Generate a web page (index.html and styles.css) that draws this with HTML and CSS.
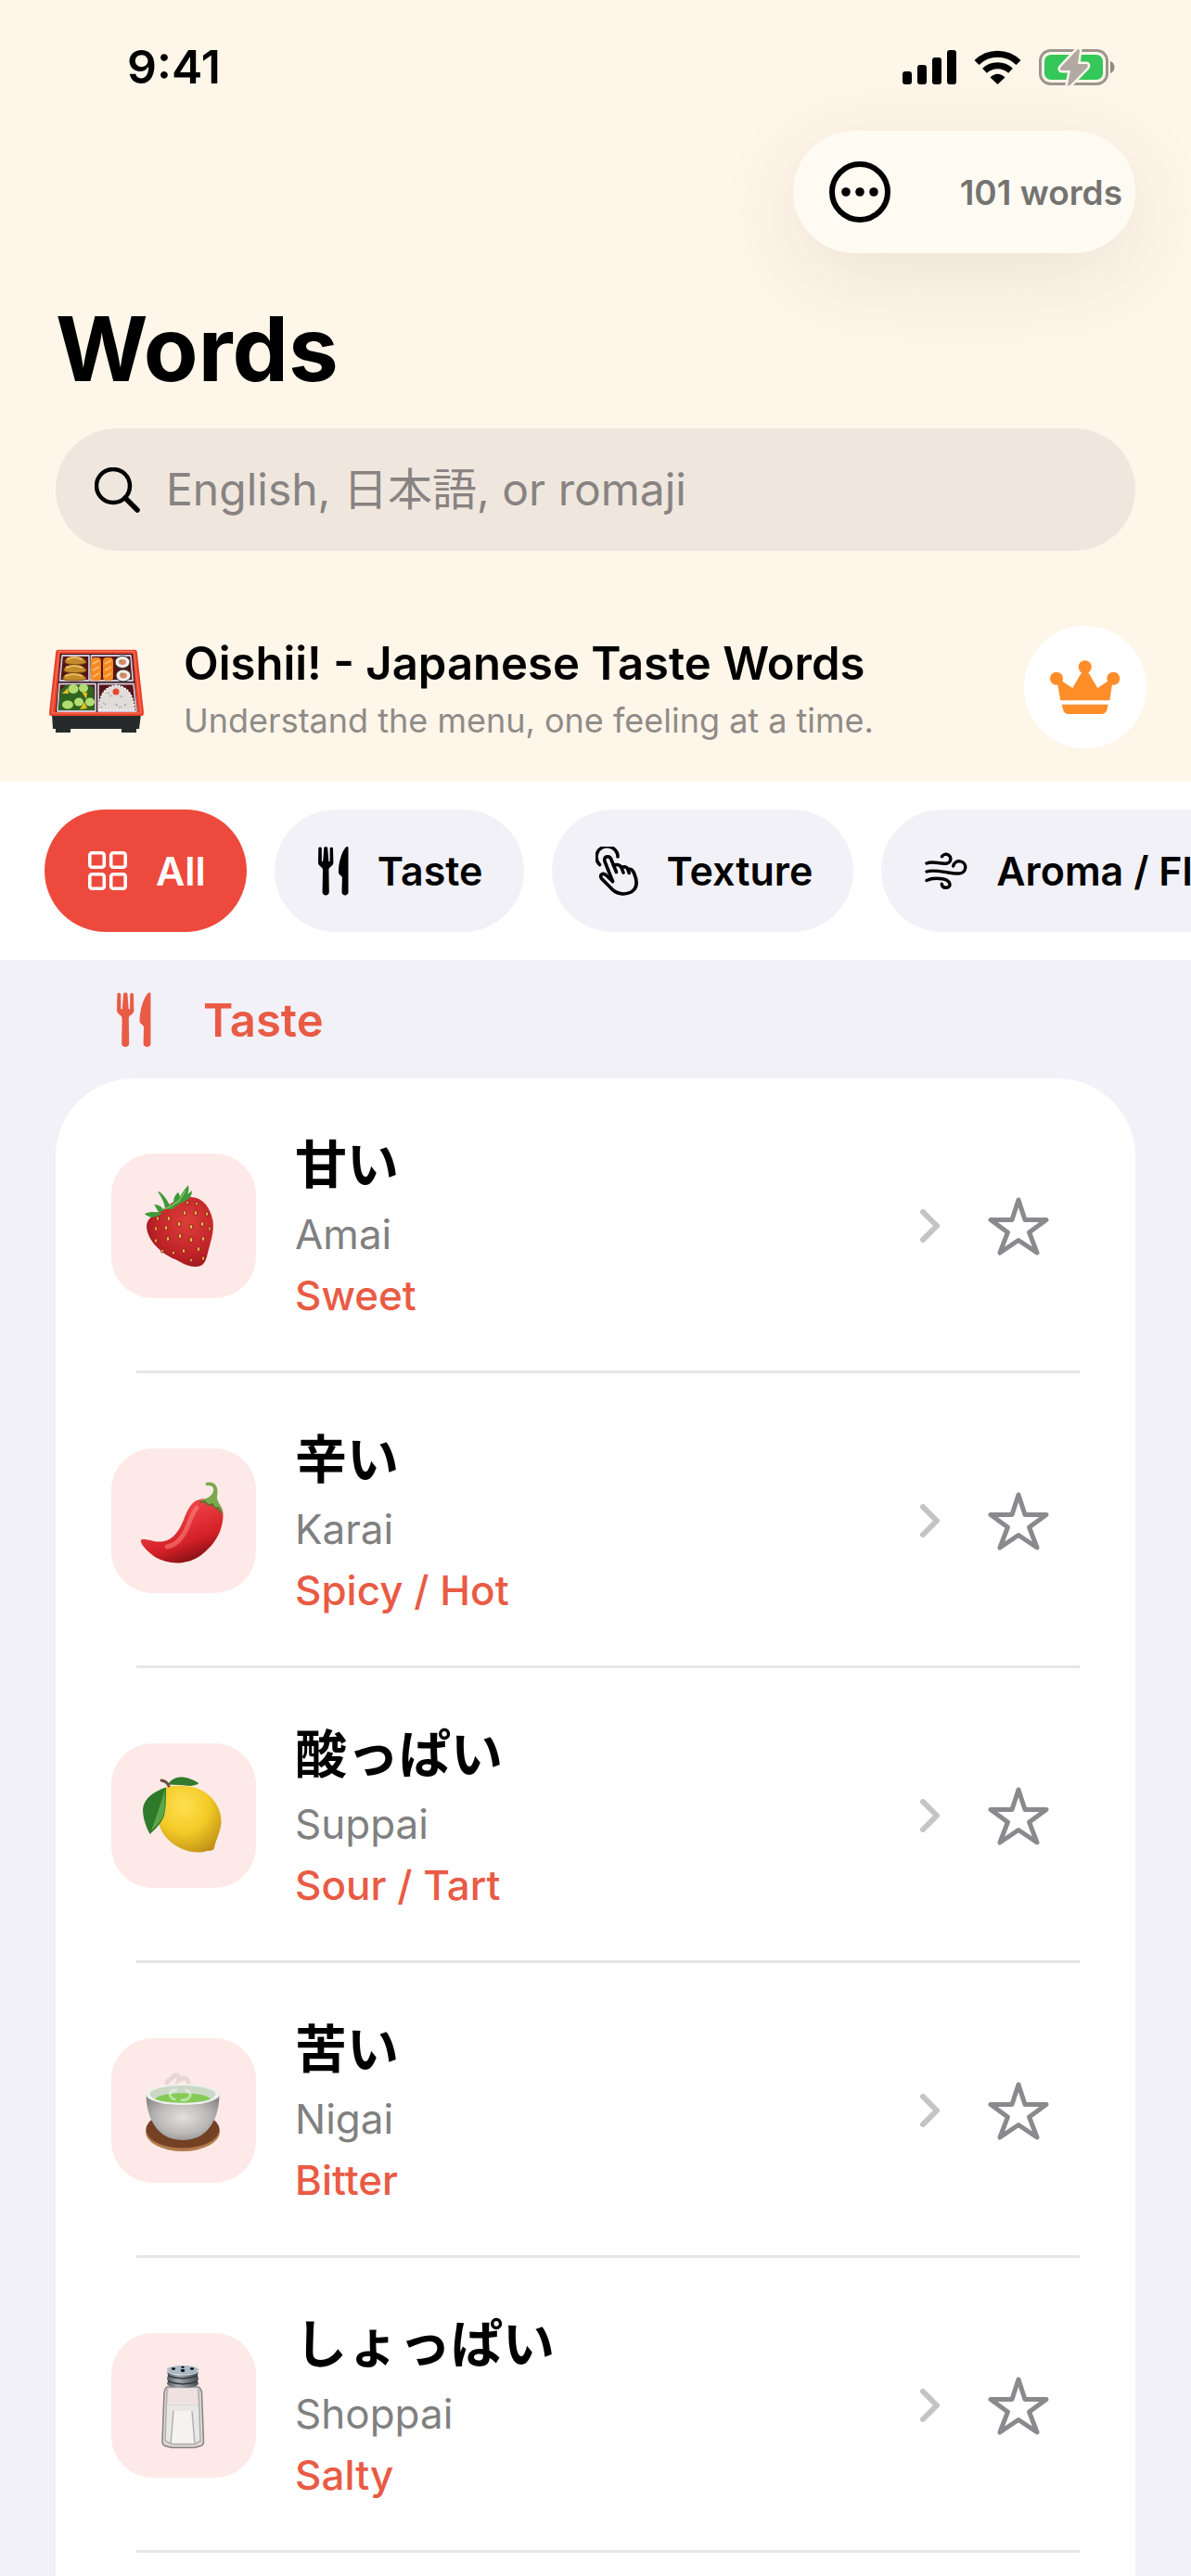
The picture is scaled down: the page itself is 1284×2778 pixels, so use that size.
FILE: index.html
```html
<!DOCTYPE html>
<html lang="en">
<head>
    <meta charset="UTF-8">
    <meta name="viewport" content="width=device-width, initial-scale=1.0">
    <title>Words</title>
    <link rel="stylesheet" href="styles.css">
</head>
<body>
    <!-- shared icons -->
    <svg class="defs" width="0" height="0" aria-hidden="true">
        <symbol id="icon-star" viewBox="0 0 66 63">
            <path d="M33 3L40 24.5H63L44.6 38L53 60L33 46.5L13 60L21.4 38L3 24.5H26Z" fill="none" stroke="currentColor" stroke-width="5" stroke-linejoin="round"/>
        </symbol>
        <symbol id="icon-chevron" viewBox="0 0 22 36">
            <path d="M3 3L18 18L3 33" fill="none" stroke="currentColor" stroke-width="6" stroke-linecap="round" stroke-linejoin="round"/>
        </symbol>
        <symbol id="icon-fork" viewBox="0 0 33 53">
            <path fill="currentColor" d="M2 .4C1 .4.3 1 .3 2L0 17c0 4.500 5 4.500 5 8l-.4 24c0 4.500 7.200 4.500 7.200 0l-.4-24c0-3.500 5-3.500 5-8L16 2c0-1.800-3.300-1.800-3.300 0l-.1 13.500c0 .9-1.300.9-1.300 0L10.200 1.500c0-1.600-3.900-1.600-3.900 0L5.200 15.500c0 .9-1.300.9-1.300 0L3.800 2C3.800 1 3 .4 2 .4z"/>
            <path fill="currentColor" d="M32.500 1.200V49c0 4.500-7 4.500-7 0l.4-16c-.6-2-4-2.500-4-5.500 0-10 3.300-21.500 7.600-26.500 1-1.300 3-1.200 3 .2z"/>
        </symbol>
    </svg>

    <header class="header">
        <div class="status-bar">
            <span class="time">9:41</span>
            <div class="status-icons">
                <svg width="58" height="37" viewBox="0 0 58 37" aria-hidden="true">
                    <rect x="0" y="23" width="10" height="14" rx="3"/>
                    <rect x="16" y="16" width="10" height="21" rx="3"/>
                    <rect x="32" y="8" width="10" height="29" rx="3"/>
                    <rect x="48" y="0" width="10" height="37" rx="3"/>
                </svg>
                <svg width="51" height="37" viewBox="0 0 51 37" aria-hidden="true">
                    <path d="M3 13.500A32 32 0 0 1 48 13.500" fill="none" stroke="#000" stroke-width="7"/>
                    <path d="M11.500 22.300A20.500 20.500 0 0 1 39.500 22.300" fill="none" stroke="#000" stroke-width="7"/>
                    <path d="M17.500 29.500Q25.500 22 33.500 29.500L25.500 37Z"/>
                </svg>
                <svg width="82" height="41" viewBox="0 0 82 41" aria-hidden="true">
                    <rect x="1.500" y="2.500" width="72" height="36" rx="11" fill="none" stroke="#9c958e" stroke-width="3"/>
                    <rect x="6" y="7" width="63" height="27" rx="7" fill="#34c759"/>
                    <path d="M77 14v13c6-2 6-11 0-13z" fill="#8f8a84"/>
                    <path d="M42 1L24 20c-2 2-1 4 1 4h9L31 39c0 2 1.500 2 3 .5L52 21c1.500-2 1-4-1-4h-9L44 2z" fill="#b1a9a2" stroke="#fff6ea" stroke-width="5" paint-order="stroke" stroke-linejoin="round"/>
                </svg>
            </div>
        </div>

        <div class="toolbar">
            <div class="toolbar-pill">
                <button class="more-button" aria-label="More options">
                    <svg width="66" height="66" viewBox="0 0 66 66" aria-hidden="true">
                        <circle cx="33" cy="33" r="30" fill="none" stroke="#000" stroke-width="6"/>
                        <circle cx="18" cy="33" r="4.800"/>
                        <circle cx="33" cy="33" r="4.800"/>
                        <circle cx="48" cy="33" r="4.800"/>
                    </svg>
                </button>
                <span class="word-count">101 words</span>
            </div>
        </div>

        <h1>Words</h1>

        <label class="search">
            <svg width="49" height="49" viewBox="0 0 49 49" fill="none" stroke="#000" stroke-linecap="round" aria-hidden="true">
                <circle cx="20" cy="20" r="18" stroke-width="4.500"/>
                <path d="M33 33L46 46" stroke-width="5.500"/>
            </svg>
            <input type="search" class="search-input" placeholder="English, 日本語, or romaji" aria-label="Search words">
        </label>

        <div class="promo">
            <svg class="promo-emoji" viewBox="-5 -8 112 99" aria-hidden="true">
                <path d="M3 70h96l-2 16h-3v4H78v-4H23v4H7v-4H4z" fill="#272a2b"/>
                <path d="M9.500.7h83q2 0 2.300 2L102 68q.3 4-3 4H3q-3.300 0-3-4L7.200 2.700q.3-2 2.300-2z" fill="#e8432c"/>
                <path d="M10.500 2.500h81L99 69H3z" fill="none" stroke="#ff7a5c" stroke-width="1"/>
                <path d="M12 5h78l5 63H7z" fill="#301418"/>
                <path d="M14 7h29v27H11.500z M45.500 7H88l2.300 27H45z M11 37.500h39V67H9z M53 37.500h38L94 67H53z" fill="#541418" stroke="#cfc4d6" stroke-width="1.800" stroke-linejoin="round"/>
                <g fill="#c58a2c" stroke="#805014" stroke-width="1">
                    <path d="M17 14c-1-7 20-8 23 0 1 3-22 4-23 0z"/>
                    <path d="M16 23c-1-7 21-8 24 0 1 3-23 4-24 0z"/>
                    <path d="M15 32c-1-7 22-8 25 0 1 2-24 3-25 0z"/>
                </g>
                <path d="M19 11q8-4 17 0M18 20q9-4 18 0M17 29q9-4 19 0" stroke="#e8bd5e" stroke-width="2" fill="none"/>
                <rect x="45" y="9" width="11" height="25" rx="4" fill="#f68a20"/>
                <rect x="58" y="9" width="11" height="25" rx="4" fill="#f68a20"/>
                <path d="M47 16l7-4M47 23l7-4M47 30l7-4M60 16l7-4M60 23l7-4M60 30l7-4" stroke="#ffbd68" stroke-width="2"/>
                <g stroke="#2f3a31" stroke-width="1" fill="#f1efee">
                    <ellipse cx="79" cy="14" rx="8" ry="6.500"/>
                    <ellipse cx="80" cy="28.500" rx="8" ry="6.500"/>
                </g>
                <ellipse cx="79" cy="14" rx="4" ry="3" fill="#e8836a"/>
                <ellipse cx="80" cy="28.500" rx="4" ry="3" fill="#e8836a"/>
                <path d="M76 12l3 2M77 26l3 2" stroke="#7ea448" stroke-width="2"/>
                <path d="M12 45q5-8 14-6 12-2 22 2l1 25H10z" fill="#2f6420"/>
                <g fill="#b3dc72">
                    <ellipse cx="26" cy="43" rx="5.500" ry="5"/>
                    <ellipse cx="37" cy="42" rx="5" ry="4.500"/>
                    <ellipse cx="20" cy="60" rx="6" ry="4.500"/>
                    <ellipse cx="32" cy="57" rx="5" ry="4.500"/>
                    <ellipse cx="44" cy="57" rx="5" ry="4.500"/>
                </g>
                <path d="M14 48l6-6 1 6zM35 46l6 1-1 7zM33 65l5-8 3 7z" fill="#e8be24"/>
                <path d="M54 66q-1-24 18-27 19 2 20 27z" fill="#dfdcd9" stroke="#fff" stroke-width="1.500" stroke-dasharray="2 1.500"/>
                <path d="M58 58l3 2m4-9l3-1m3 9l3 2m5-9l-3-2m7 9l-2 2m-19-14l3 1m10 15l3-1m-21 1l-2-1" stroke="#aaa5a2" stroke-width="1.200"/>
                <circle cx="72" cy="46" r="3.500" fill="#e84730"/>
            </svg>
            <div class="promo-text">
                <h2>Oishii! - Japanese Taste Words</h2>
                <p>Understand the menu, one feeling at a time.</p>
            </div>
            <button class="crown-button" aria-label="Go premium">
                <svg width="76" height="58" viewBox="0 0 76 58" fill="#ff8d28" aria-hidden="true">
                    <circle cx="7" cy="19.700" r="7"/>
                    <circle cx="37.700" cy="7.200" r="7"/>
                    <circle cx="68.300" cy="19.700" r="7"/>
                    <path d="M8 25L13 22.500L24.300 30L34.500 12.500h6.400L51.300 30L62.500 22.500L67 26L64.300 43.300H11.300Z"/>
                    <path d="M12.700 47.700H62.700L61.500 53q-1.200 5-6 5H20q-4.800 0-6-5z"/>
                </svg>
            </button>
        </div>
    </header>

    <nav class="chips" aria-label="Categories">
        <button class="chip chip-active">
            <svg width="42" height="42" viewBox="0 0 42 42" fill="none" stroke="currentColor" stroke-width="3.600" aria-hidden="true">
                <rect x="1.800" y="1.800" width="15.500" height="15.500" rx="2.500"/>
                <rect x="24.700" y="1.800" width="15.500" height="15.500" rx="2.500"/>
                <rect x="1.800" y="24.700" width="15.500" height="15.500" rx="2.500"/>
                <rect x="24.700" y="24.700" width="15.500" height="15.500" rx="2.500"/>
            </svg>
            All
        </button>
        <button class="chip">
            <svg width="33" height="53" aria-hidden="true"><use href="#icon-fork"/></svg>
            Taste
        </button>
        <button class="chip">
            <svg width="46" height="53" viewBox="0 0 46 53" fill="none" stroke="currentColor" stroke-width="3.600" stroke-linecap="round" stroke-linejoin="round" aria-hidden="true">
                <path d="M4.500 19.500A11.500 11.500 0 1 1 24 11"/>
                <path d="M18.500 37.500L10 16c-2-5 4.500-7.500 6.700-2.700L22.500 27.500"/>
                <path d="M19.500 20.500c3.500-2 7-.5 8.500 2 3-1.500 6-.5 7 2 3-1 5 .5 6.500 4 4.200 9.500 3.500 16.500-3 20.500-8 4-17 1.500-22-4.500L6.500 34.500c-2.500-4.500 1.500-6.500 4.500-4l7.500 7"/>
                <path d="M28 22.500l2 5.500M35 24.500l1.200 4"/>
            </svg>
            Texture
        </button>
        <button class="chip">
            <svg width="46" height="40" viewBox="0 0 46 40" fill="none" stroke="currentColor" stroke-width="3.400" stroke-linecap="round" aria-hidden="true">
                <path d="M2 12c7-3 13 .7 20.500.2a5 5 0 1 0-4-7.500"/>
                <path d="M2 21c9-3.500 23 2.500 35 2a6.600 6.600 0 1 0-6.300-8"/>
                <path d="M2 30.500c6-3 11-2.700 17-1.700 9 1.200 10.500 9.200 4 9.500-2.800.1-4.500-1.500-4.700-4"/>
            </svg>
            Aroma / Flavor
        </button>
    </nav>

    <main class="content">
        <h2 class="section-title">
            <svg width="37" height="60" aria-hidden="true"><use href="#icon-fork"/></svg>
            Taste
        </h2>

        <ul class="word-list">
            <li class="word">
                <div class="word-row">
                    <a href="#amai" class="word-link">
                        <svg class="thumb" viewBox="0 0 156 156" aria-hidden="true">
                            <defs>
                                <radialGradient id="berry" cx=".6" cy=".35" r=".75">
                                    <stop offset="0" stop-color="#dd3f3a"/>
                                    <stop offset=".6" stop-color="#c32429"/>
                                    <stop offset="1" stop-color="#94141c"/>
                                </radialGradient>
                            </defs>
                            <path d="M38 79C38 70 45 67 53 62C62 56 71 47 84 47C98 46 107 58 109.600 73C111 84 107 96 104 107C102 117 99 122 91 122C80 122 75 116 66 113C52 106 39 93 38 79Z" fill="url(#berry)"/>
                            <path d="M50 41c4 0 10 8 13 15l-5 3c-1-7-4-12-8-18zM36 65c6-3 13-2 19-1-5 5-13 7-19 1zM46 55c6 0 9 3 11 7l-6 1c-2-3-3-5-5-8zM67 54c0-6 2-10 5-12 3 3 2 8 1 12zM60 60c2-6 7-6 11-6 2-7 6-13 12-20 1 5 0 8-1 10l5-4c0 6-3 9-7 11-6 3-10 5-14 9z" fill="#3f9a3a"/>
                            <path d="M56 60l6-2 11-7 7-11" fill="none" stroke="#78c25c" stroke-width="1.500"/>
                            <g fill="#f1b24a" stroke="#7d1518" stroke-width=".8">
                                <ellipse cx="50" cy="70" rx="1.500" ry="2.500"/><ellipse cx="62" cy="70" rx="1.800" ry="2.500"/><ellipse cx="79" cy="64" rx="1.800" ry="2.500"/>
                                <ellipse cx="91" cy="64" rx="1.800" ry="2.500"/><ellipse cx="103" cy="65" rx="1.500" ry="2.500"/><ellipse cx="82" cy="53" rx="1.500" ry="2"/>
                                <ellipse cx="92" cy="54" rx="1.500" ry="2"/><ellipse cx="48" cy="81" rx="1.500" ry="2.500"/><ellipse cx="59" cy="80" rx="1.800" ry="2.500"/>
                                <ellipse cx="73" cy="76" rx="1.900" ry="2.700"/><ellipse cx="86" cy="79" rx="1.900" ry="2.700"/><ellipse cx="98" cy="76" rx="1.800" ry="2.700"/>
                                <ellipse cx="106" cy="81" rx="1.300" ry="2.500"/><ellipse cx="48" cy="94" rx="1.500" ry="2.300"/><ellipse cx="61" cy="92" rx="1.800" ry="2.500"/>
                                <ellipse cx="74" cy="89" rx="1.900" ry="2.700"/><ellipse cx="86" cy="93" rx="1.900" ry="2.700"/><ellipse cx="99" cy="92" rx="1.800" ry="2.500"/>
                                <ellipse cx="55" cy="105" rx="1.500" ry="2"/><ellipse cx="67" cy="107" rx="1.600" ry="2"/><ellipse cx="78" cy="105" rx="1.800" ry="2.300"/>
                                <ellipse cx="94" cy="103" rx="1.800" ry="2.500"/><ellipse cx="86" cy="115" rx="1.500" ry="2"/><ellipse cx="99" cy="113" rx="1.500" ry="2.300"/>
                            </g>
                        </svg>
                        <span class="word-text">
                            <span class="word-ja" lang="ja">甘い</span>
                            <span class="word-romaji">Amai</span>
                            <span class="word-en">Sweet</span>
                        </span>
                        <svg class="chevron" aria-hidden="true"><use href="#icon-chevron"/></svg>
                    </a>
                    <button class="star-button" aria-label="Add Amai to favorites">
                        <svg class="star" aria-hidden="true"><use href="#icon-star"/></svg>
                    </button>
                </div>
            </li>
            <li class="word">
                <div class="word-row">
                    <a href="#karai" class="word-link">
                        <svg class="thumb" viewBox="0 0 156 156" aria-hidden="true">
                            <defs>
                                <linearGradient id="chili" x1=".4" y1=".2" x2=".75" y2=".95">
                                    <stop offset="0" stop-color="#ee4045"/>
                                    <stop offset=".6" stop-color="#d42027"/>
                                    <stop offset="1" stop-color="#7c1013"/>
                                </linearGradient>
                            </defs>
                            <path d="M34 98C42 98 47 102 57 100C67 98 73 89 78 77C82 66 87 56 96 55C106 53 120 58 120.500 70C121 90 110 105 97 115C82 126 62 126 47 117C40 112 34 106 32 101C31.500 99 32 98 34 98Z" fill="url(#chili)"/>
                            <path d="M92 64c-8 10-8 21-15 30-4 6-10 11-17 12" fill="none" stroke="#ff8581" stroke-width="5" stroke-linecap="round" opacity=".55"/>
                            <path d="M95 57c7-3 14-5 15-11 1-5-2-6-7-6-2 0-2-3 1-3.500 8-1 12 5 10 15-1 6 6 10 6 19-2-1-4-3-6-7-2 1-4 0-6-4-3 2-6 0-8-3-2 1-4 1-5 .5z" fill="#79a94a"/>
                            <path d="M95 57c2 1 4 1 6 0 2 4 5 5 8 3 2 4 4 5 6 4l4 6" fill="none" stroke="#4d702a" stroke-width="1.500"/>
                        </svg>
                        <span class="word-text">
                            <span class="word-ja" lang="ja">辛い</span>
                            <span class="word-romaji">Karai</span>
                            <span class="word-en">Spicy / Hot</span>
                        </span>
                        <svg class="chevron" aria-hidden="true"><use href="#icon-chevron"/></svg>
                    </a>
                    <button class="star-button" aria-label="Add Karai to favorites">
                        <svg class="star" aria-hidden="true"><use href="#icon-star"/></svg>
                    </button>
                </div>
            </li>
            <li class="word">
                <div class="word-row">
                    <a href="#suppai" class="word-link">
                        <svg class="thumb" viewBox="0 0 156 156" aria-hidden="true">
                            <defs>
                                <radialGradient id="lemon" cx=".4" cy=".3" r=".8">
                                    <stop offset="0" stop-color="#ffe052"/>
                                    <stop offset=".5" stop-color="#f3cb27"/>
                                    <stop offset="1" stop-color="#bd8d14"/>
                                </radialGradient>
                            </defs>
                            <path d="M60 47C70 45 84 45 94 49C108 55 119 69 118.500 85C118 96 112 105 111 113C110 117 104 115 100 117C84 120 66 111 58 100C48 88 50 73 54 62C56 55 56 49 60 47Z" fill="url(#lemon)"/>
                            <path d="M59 47.500C46 52 35 59 34 71C34 82 38 91 41.600 98C50 90 57 83 58 73C59 63 59 57 59 47.500Z" fill="#2f7a2a"/>
                            <path d="M58 50C54 62 49 78 43 94C50 88 56 82 57.500 73Z" fill="#5ba648"/>
                            <path d="M61 44.500C65 38 72 35.500 80 37C87 38.500 91 41 94.500 43C89 47 82 46 75 45Z" fill="#327a2c"/>
                            <path d="M62 46q-2-5-8-6" fill="none" stroke="#6b5146" stroke-width="3" stroke-linecap="round"/>
                        </svg>
                        <span class="word-text">
                            <span class="word-ja" lang="ja">酸っぱい</span>
                            <span class="word-romaji">Suppai</span>
                            <span class="word-en">Sour / Tart</span>
                        </span>
                        <svg class="chevron" aria-hidden="true"><use href="#icon-chevron"/></svg>
                    </a>
                    <button class="star-button" aria-label="Add Suppai to favorites">
                        <svg class="star" aria-hidden="true"><use href="#icon-star"/></svg>
                    </button>
                </div>
            </li>
            <li class="word">
                <div class="word-row">
                    <a href="#nigai" class="word-link">
                        <svg class="thumb" viewBox="0 0 156 156" aria-hidden="true">
                            <defs>
                                <radialGradient id="bowl" cx=".5" cy=".5" r=".6">
                                    <stop offset="0" stop-color="#e2e1e0"/>
                                    <stop offset=".6" stop-color="#b9b8b7"/>
                                    <stop offset="1" stop-color="#8a8988"/>
                                </radialGradient>
                            </defs>
                            <ellipse cx="77" cy="101" rx="40" ry="21" fill="#b27a4b"/>
                            <ellipse cx="77" cy="98.500" rx="39.500" ry="20" fill="#744125"/>
                            <path d="M37.500 61C38 90 52 110 77 110S116 90 116.500 61Z" fill="url(#bowl)"/>
                            <ellipse cx="77" cy="60.500" rx="39.800" ry="11.500" fill="#f0f0ef"/>
                            <ellipse cx="77" cy="60.500" rx="35.500" ry="9.500" fill="#ccd8c6"/>
                            <path d="M47 65.500C53 57 101 57 107 65.500C98 71 56 71 47 65.500Z" fill="#84ca55"/>
                            <path d="M68 66c-8-4-5-10 2-10M76 67c10-1 12-7 5-11" fill="none" stroke="#fff" stroke-width="3" stroke-linecap="round" opacity=".45"/>
                            <path d="M60 48c1-5 6-3 7-7 4-3 7 1 6 4 5-3 9-2 10 2" fill="none" stroke="#d8cac7" stroke-width="5" stroke-linecap="round" opacity=".6"/>
                        </svg>
                        <span class="word-text">
                            <span class="word-ja" lang="ja">苦い</span>
                            <span class="word-romaji">Nigai</span>
                            <span class="word-en">Bitter</span>
                        </span>
                        <svg class="chevron" aria-hidden="true"><use href="#icon-chevron"/></svg>
                    </a>
                    <button class="star-button" aria-label="Add Nigai to favorites">
                        <svg class="star" aria-hidden="true"><use href="#icon-star"/></svg>
                    </button>
                </div>
            </li>
            <li class="word">
                <div class="word-row">
                    <a href="#shoppai" class="word-link">
                        <svg class="thumb" viewBox="0 0 156 156" aria-hidden="true">
                            <defs>
                                <linearGradient id="cap">
                                    <stop offset="0" stop-color="#50585e"/>
                                    <stop offset=".35" stop-color="#a5adb3"/>
                                    <stop offset="1" stop-color="#454c51"/>
                                </linearGradient>
                            </defs>
                            <path d="M60 58h34q3 2 3.500 6l2 53q0 4-4 5l-6 1.500H65L59 122q-4-1-4-5l2-53q.3-4 3-6z" fill="#dcd6d5" stroke="#858280" stroke-width="1.500"/>
                            <path d="M62 60h30l2 17H60z" fill="#efe1df"/>
                            <path d="M60 78h34l2 37-7 4H65l-7-4z" fill="#e9e7e6"/>
                            <path d="M67 84h20l3 34H64z" fill="#f4f3f2"/>
                            <path d="M60 60l-2 56M94 60l2 56M67 84l-3 36M87 84l3 36M58 116l7 4h25l7-4" fill="none" stroke="#b4b0ae" stroke-width="1.500"/>
                            <path d="M60 39h34l-1 7 1 3-1 3 1 3q-3 4-17 4t-17-4l1-3-1-3 1-3z" fill="url(#cap)"/>
                            <path d="M61 46q16 6 32 0M61 52q16 6 32 0" fill="none" stroke="#383e42" stroke-width="1.500"/>
                            <ellipse cx="77" cy="39.500" rx="17" ry="4.500" fill="#a9bac6"/>
                            <path d="M60 40q2 5 17 5t17-5" fill="none" stroke="#dce3e7" stroke-width="1.200"/>
                            <ellipse cx="67" cy="38.500" rx="2" ry="1.200"/><ellipse cx="77" cy="40.500" rx="2.300" ry="1.400"/><ellipse cx="87" cy="38.500" rx="2" ry="1.200"/><ellipse cx="77" cy="36.800" rx="1.800" ry="1"/>
                        </svg>
                        <span class="word-text">
                            <span class="word-ja" lang="ja">しょっぱい</span>
                            <span class="word-romaji">Shoppai</span>
                            <span class="word-en">Salty</span>
                        </span>
                        <svg class="chevron" aria-hidden="true"><use href="#icon-chevron"/></svg>
                    </a>
                    <button class="star-button" aria-label="Add Shoppai to favorites">
                        <svg class="star" aria-hidden="true"><use href="#icon-star"/></svg>
                    </button>
                </div>
            </li>
        </ul>
    </main>
</body>
</html>
```

FILE: styles.css
```css
:root {
    --header-bg: #fff6ea;
    --page-bg: #f2f1f8;
    --accent: #ed4a3d;
    --accent-text: #e95b45;
    --thumb-bg: #fde9e7;
    --gray: #808080;
    --separator: #e6e6e6;
}
* {
    box-sizing: border-box;
}
body {
    font-family: Inter, "Noto Sans CJK JP", sans-serif;
    background-color: var(--page-bg);
    color: #000;
    margin: 0;
    min-height: 100vh;
    display: flex;
    flex-direction: column;
}
h1, h2, p, ul {
    margin: 0;
    padding: 0;
}
button {
    font: inherit;
    color: inherit;
    border: none;
    background: none;
    padding: 0;
    cursor: pointer;
}
svg {
    display: block;
    flex-shrink: 0;
}
.defs {
    position: absolute;
}

/* header */
.header {
    background-color: var(--header-bg);
    padding: 48px 60px 36px;
}
.status-bar {
    display: flex;
    align-items: center;
    justify-content: space-between;
    height: 48px;
    padding: 0 22px 0 77px;
    margin-bottom: 45px;
}
.time {
    font-size: 50px;
    font-weight: 600;
}
.status-icons {
    display: flex;
    align-items: center;
    gap: 19px;
}
.toolbar {
    display: flex;
    justify-content: flex-end;
    margin-bottom: 42px;
}
.toolbar-pill {
    display: flex;
    align-items: center;
    gap: 75px;
    height: 132px;
    padding: 0 14px 0 39px;
    border-radius: 66px;
    background-color: #fffbf3;
    box-shadow: 0 24px 96px rgba(60, 40, 20, 0.1);
}
.word-count {
    font-size: 37px;
    font-weight: 600;
    color: #757371;
}
h1 {
    font-size: 96px;
    line-height: 122px;
    font-weight: 700;
    margin-bottom: 25px;
}
.search {
    display: flex;
    align-items: center;
    gap: 28px;
    height: 132px;
    padding: 0 42px;
    border-radius: 66px;
    background-color: #efe7de;
    margin-bottom: 81px;
}
.search-input {
    flex: 1;
    min-width: 0;
    font: inherit;
    font-size: 48px;
    line-height: 72px;
    border: none;
    background: none;
    outline: none;
    padding: 0;
}
.search-input::placeholder {
    color: #888382;
    opacity: 1;
}
.promo {
    display: flex;
    align-items: center;
    gap: 38px;
    margin: 0 -12px;
}
.promo-emoji {
    width: 112px;
    height: 99px;
}
.promo-text {
    flex: 1;
    display: flex;
    flex-direction: column;
    gap: 6px;
    padding-top: 3px;
    white-space: nowrap;
}
.promo-text h2 {
    font-size: 49px;
    line-height: 62px;
    font-weight: 600;
}
.promo-text p {
    font-size: 36px;
    line-height: 48px;
    color: #8f8b87;
}
.crown-button {
    display: flex;
    align-items: center;
    justify-content: center;
    width: 132px;
    height: 132px;
    border-radius: 50%;
    background-color: #fff;
}

/* category chips */
.chips {
    display: flex;
    gap: 30px;
    padding: 30px 48px;
    background-color: #fff;
    overflow-x: auto;
    scrollbar-width: none;
}
.chip {
    display: flex;
    align-items: center;
    gap: 31px;
    flex-shrink: 0;
    height: 132px;
    padding: 0 44px 0 47px;
    border-radius: 66px;
    background-color: var(--page-bg);
    font-size: 43px;
    font-weight: 600;
    white-space: nowrap;
}
.chip-active {
    background-color: var(--accent);
    color: #fff;
}

/* word list */
.content {
    flex: 1;
    display: flex;
    flex-direction: column;
    padding: 0 60px;
}
.section-title {
    display: flex;
    align-items: center;
    gap: 56px;
    height: 128px;
    padding: 2px 0 0 66px;
    font-size: 49px;
    font-weight: 600;
    color: var(--accent-text);
}
.word-list {
    flex: 1;
    list-style: none;
    background-color: #fff;
    border-radius: 84px 84px 0 0;
}
.word::after {
    content: "";
    display: block;
    height: 3px;
    margin: 0 60px 0 87px;
    background-color: var(--separator);
}
.word-row {
    display: flex;
    align-items: center;
    padding: 54px 60px 51px;
}
.word-link {
    flex: 1;
    display: flex;
    align-items: center;
    gap: 42px;
    padding-right: 18px;
    color: inherit;
    text-decoration: none;
}
.thumb {
    width: 156px;
    height: 156px;
    border-radius: 45px;
    background-color: var(--thumb-bg);
}
.word-text {
    flex: 1;
    display: flex;
    flex-direction: column;
    gap: 6px;
    font-size: 44px;
    line-height: 60px;
}
.word-ja {
    font-size: 56px;
    line-height: 78px;
    font-weight: 700;
}
.word-romaji {
    color: var(--gray);
}
.word-en {
    font-weight: 500;
    color: var(--accent-text);
}
.chevron {
    width: 22px;
    height: 36px;
    color: #c4c4c6;
}
.star-button {
    display: flex;
    align-items: center;
    justify-content: center;
    width: 132px;
    height: 132px;
    color: #8a8a8e;
}
.star {
    width: 66px;
    height: 63px;
}
```
